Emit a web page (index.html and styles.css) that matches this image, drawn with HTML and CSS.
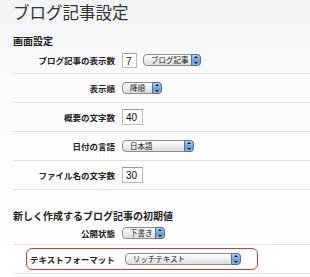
FILE: index.html
```html
<!DOCTYPE html>
<html lang="ja">
<head>
    <meta charset="UTF-8">
    <title>ブログ記事設定</title>
    <link rel="stylesheet" href="styles.css">
</head>
<body>
    <div class="page">
        <h1>ブログ記事設定</h1>

        <h2 class="group-title">画面設定</h2>
        <div class="row first">
            <span class="lbl">ブログ記事の表示数</span>
            <div class="ctl">
                <span class="field w-s">7</span>
                <span class="select sel-posts">ブログ記事<span class="arrow"></span></span>
            </div>
        </div>
        <div class="row">
            <span class="lbl">表示順</span>
            <div class="ctl">
                <span class="select sel-order">降順<span class="arrow"></span></span>
            </div>
        </div>
        <div class="row">
            <span class="lbl">概要の文字数</span>
            <div class="ctl">
                <span class="field w-m">40</span>
            </div>
        </div>
        <div class="row">
            <span class="lbl">日付の言語</span>
            <div class="ctl">
                <span class="select sel-lang">日本語<span class="arrow"></span></span>
            </div>
        </div>
        <div class="row">
            <span class="lbl">ファイル名の文字数</span>
            <div class="ctl">
                <span class="field w-m">30</span>
            </div>
        </div>

        <h2 class="group-title second">新しく作成するブログ記事の初期値</h2>
        <div class="row short">
            <span class="lbl">公開状態</span>
            <div class="ctl">
                <span class="select sel-status">下書き<span class="arrow"></span></span>
            </div>
        </div>
        <div class="row boxed">
            <div class="highlight">
                <span class="lbl">テキストフォーマット</span>
                <span class="select sel-format">リッチテキスト<span class="arrow"></span></span>
            </div>
        </div>
    </div>
</body>
</html>
```

FILE: styles.css
```css
body {
    margin: 0;
    font-family: "Noto Sans CJK JP", "Liberation Sans", sans-serif;
    color: #222;
    background: linear-gradient(#f1f3f5, #fcfcfd 90px, #fff);
    height: 277px;
    overflow: hidden;
}
.page {
    padding: 0 0 0 13px;
}
h1 {
    margin: 0;
    padding-top: 1px;
    font-size: 16.5px;
    font-weight: normal;
    line-height: 22px;
    color: #333;
}
.group-title {
    margin: 12px 0 0;
    font-size: 10px;
    line-height: 12px;
    font-weight: bold;
}
.group-title.second {
    margin-top: 20px;
}
.row {
    display: grid;
    grid-template-columns: 102px auto;
    column-gap: 7px;
    align-items: center;
    height: 28px;
    border-bottom: 1px solid #e2e3e5;
}
.row.first {
    height: 26px;
}
.row.short {
    height: 22px;
}
.lbl {
    text-align: right;
    font-size: 8.5px;
    font-weight: bold;
    line-height: 12px;
    white-space: nowrap;
}
.ctl {
    display: flex;
    align-items: center;
    gap: 6px;
}
.field {
    display: inline-block;
    box-sizing: border-box;
    height: 15px;
    padding: 1px 3px;
    background: #fff;
    border: 1px solid #b9b9b9;
    border-top-color: #9a9a9a;
    font-family: "Liberation Sans", sans-serif;
    font-size: 10px;
    line-height: 13px;
    color: #111;
}
.field.w-s { width: 15px; }
.field.w-m { width: 21px; height: 16px; }

.select {
    position: relative;
    display: inline-block;
    box-sizing: border-box;
    height: 12px;
    padding: 0 14px 0 7px;
    border: 1px solid #8d8d8d;
    border-radius: 4px;
    background: linear-gradient(#fefefe, #ececec 55%, #dcdcdc);
    font-size: 7.5px;
    line-height: 10px;
    color: #222;
    white-space: nowrap;
}
.select .arrow {
    position: absolute;
    top: -1px;
    right: -1px;
    width: 10px;
    height: 12px;
    box-sizing: border-box;
    border: 1px solid #52709a;
    border-radius: 0 4px 4px 0;
    background: linear-gradient(#b7d3f1, #6f9fd6 55%, #8bb6e6);
}
.select .arrow::before,
.select .arrow::after {
    content: "";
    position: absolute;
    left: 2px;
    border-left: 2px solid transparent;
    border-right: 2px solid transparent;
}
.select .arrow::before {
    top: 1px;
    border-bottom: 2px solid #111;
}
.select .arrow::after {
    bottom: 1px;
    border-top: 2px solid #111;
}
.sel-posts { width: 58px; }
.sel-order { width: 40px; }
.sel-lang { width: 72px; }
.sel-status { width: 43px; }
.sel-format { width: 116px; }

.row.boxed {
    display: flex;
    align-items: center;
}
.highlight {
    display: flex;
    align-items: center;
    gap: 10px;
    box-sizing: border-box;
    width: 232px;
    height: 22px;
    margin-left: 13px;
    padding-left: 3px;
    border: 1.5px solid #d23a3a;
    border-radius: 6px;
}
```
